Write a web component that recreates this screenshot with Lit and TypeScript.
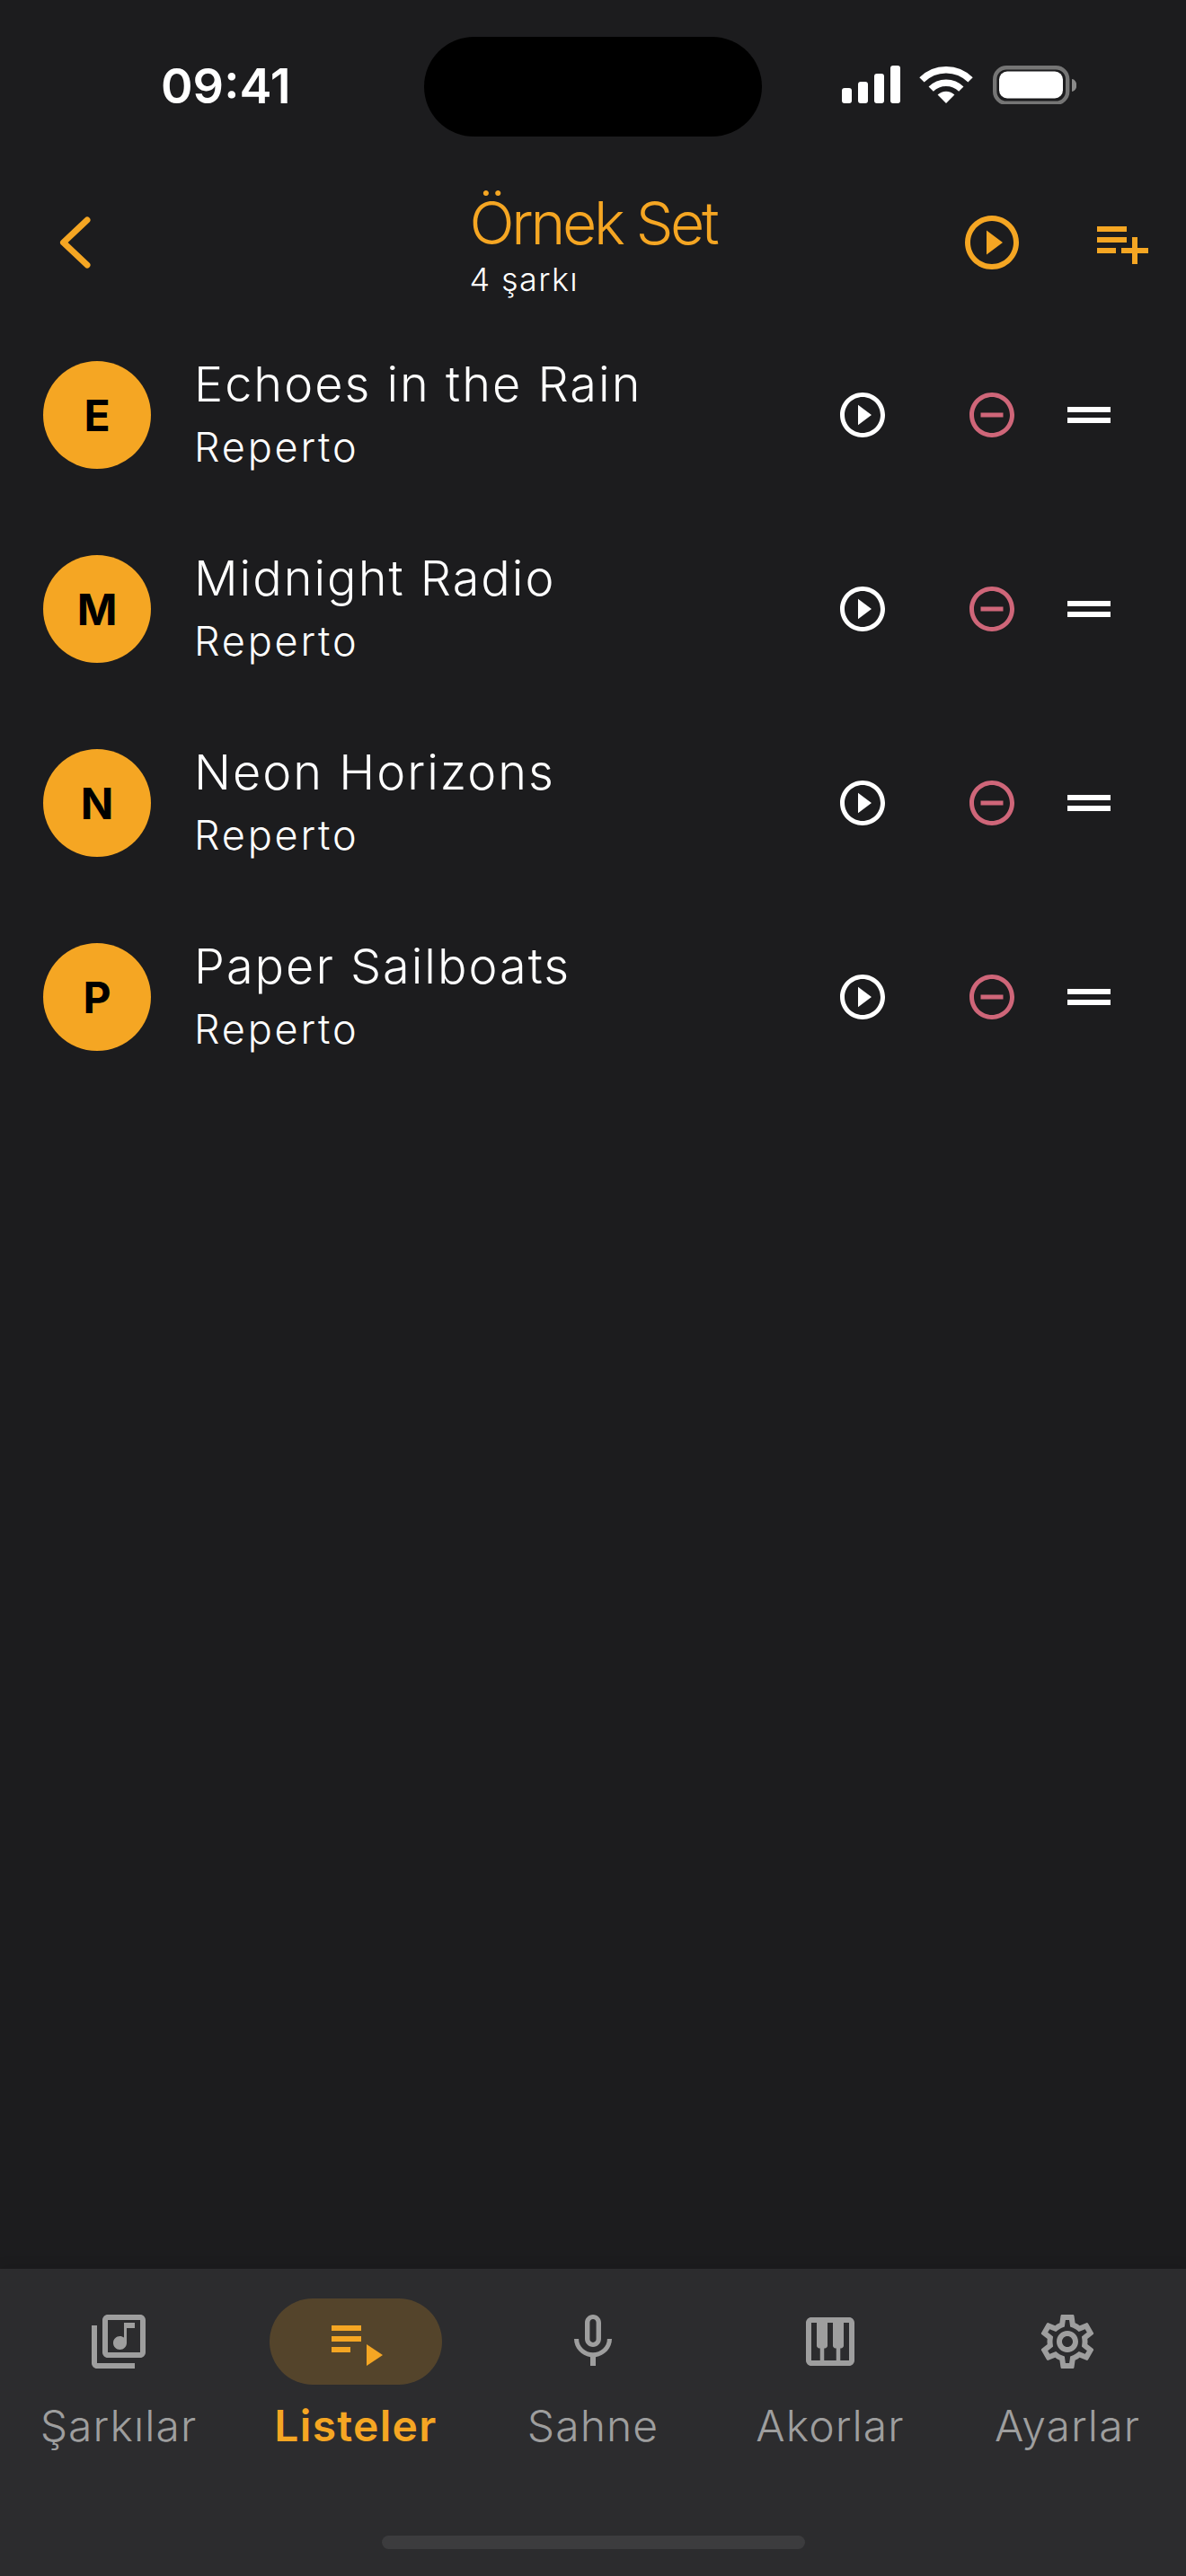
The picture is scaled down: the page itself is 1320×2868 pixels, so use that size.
import { LitElement, html, css, svg } from "lit";
import { customElement } from "lit/decorators.js";

const P = {
  playCircle: "M10 16.5l6-4.5-6-4.5v9zM12 2C6.48 2 2 6.48 2 12s4.48 10 10 10 10-4.48 10-10S17.52 2 12 2zm0 18c-4.41 0-8-3.59-8-8s3.59-8 8-8 8 3.59 8 8-3.59 8-8 8z",
  minusCircle: "M7 11v2h10v-2H7zm5-9C6.48 2 2 6.48 2 12s4.48 10 10 10 10-4.48 10-10S17.52 2 12 2zm0 18c-4.41 0-8-3.59-8-8s3.59-8 8-8 8 3.59 8 8-3.59 8-8 8z",
  drag: "M20 9H4v2h16V9zM4 15h16v-2H4v2z",
  playlistAdd: "M14 10H3v2h11v-2zm0-4H3v2h11V6zm4 8v-4h-2v4h-4v2h4v4h2v-4h4v-2h-4zM3 16h7v-2H3v2z",
  playlistPlay: "M14 10H3v2h11v-2zm0-4H3v2h11V6zM3 16h7v-2H3v2zm13-3v8l6-4-6-4z",
  library: "M20 2H8c-1.1 0-2 .9-2 2v12c0 1.1.9 2 2 2h12c1.1 0 2-.9 2-2V4c0-1.1-.9-2-2-2zm0 14H8V4h12v12zm-7.5-1c1.38 0 2.5-1.12 2.5-2.5V7h3V5h-4v5.51c-.42-.32-.93-.51-1.5-.51-1.38 0-2.5 1.12-2.5 2.5s1.12 2.5 2.5 2.5zM2 6v14c0 1.1.9 2 2 2h14v-2H4V6H2z",
  mic: "M12 14c1.66 0 2.99-1.34 2.99-3L15 5c0-1.66-1.34-3-3-3S9 3.34 9 5v6c0 1.66 1.34 3 3 3zm-1.2-9.1c0-.66.54-1.2 1.2-1.2.66 0 1.2.54 1.2 1.2l-.01 6.2c0 .66-.53 1.2-1.19 1.2-.66 0-1.2-.54-1.2-1.2V4.9zm6.5 6.1c0 3-2.54 5.1-5.3 5.1S6.7 14 6.7 11H5c0 3.41 2.72 6.23 6 6.72V21h2v-3.28c3.28-.48 6-3.3 6-6.72h-1.7z",
  piano: "M19 3H5c-1.1 0-2 .9-2 2v14c0 1.1.9 2 2 2h14c1.1 0 2-.9 2-2V5c0-1.1-.9-2-2-2zm-5 11.5h.25V19h-4.5v-4.5H10c.55 0 1-.45 1-1V5h2v8.5c0 .55.45 1 1 1zM5 5h2v8.5c0 .55.45 1 1 1h.25V19H5V5zm14 14h-3.25v-4.5H16c.55 0 1-.45 1-1V5h2v14z",
  gear: "M19.43 12.98c.04-.32.07-.64.07-.98 0-.34-.03-.66-.07-.98l2.11-1.65c.19-.15.24-.42.12-.64l-2-3.46c-.09-.16-.26-.25-.44-.25-.06 0-.12.01-.17.03l-2.49 1c-.52-.4-1.08-.73-1.69-.98l-.38-2.65C14.46 2.18 14.25 2 14 2h-4c-.25 0-.46.18-.49.42l-.38 2.65c-.61.25-1.17.59-1.69.98l-2.49-1c-.06-.02-.12-.03-.18-.03-.17 0-.34.09-.43.25l-2 3.46c-.13.22-.07.49.12.64l2.11 1.65c-.04.32-.07.65-.07.98 0 .33.03.66.07.98l-2.11 1.65c-.19.15-.24.42-.12.64l2 3.46c.09.16.26.25.44.25.06 0 .12-.01.17-.03l2.49-1c.52.4 1.08.73 1.69.98l.38 2.65c.03.24.24.42.49.42h4c.25 0 .46-.18.49-.42l.38-2.65c.61-.25 1.17-.59 1.69-.98l2.49 1c.06.02.12.03.18.03.17 0 .34-.09.43-.25l2-3.46c.12-.22.07-.49-.12-.64l-2.11-1.65zm-1.98-1.71c.04.31.05.52.05.73 0 .21-.02.43-.05.73l-.14 1.13.89.7 1.08.84-.7 1.21-1.27-.51-1.04-.42-.9.68c-.43.32-.84.56-1.25.73l-1.06.43-.16 1.13-.2 1.35h-1.4l-.19-1.35-.16-1.13-1.06-.43c-.43-.18-.83-.41-1.23-.71l-.91-.7-1.06.43-1.27.51-.7-1.21 1.08-.84.89-.7-.14-1.13c-.03-.31-.05-.54-.05-.74s.02-.43.05-.73l.14-1.13-.89-.7-1.08-.84.7-1.21 1.27.51 1.04.42.9-.68c.43-.32.84-.56 1.25-.73l1.06-.43.16-1.13.2-1.35h1.39l.19 1.35.16 1.13 1.06.43c.43.18.83.41 1.23.71l.91.7 1.06-.43 1.27-.51.7 1.21-1.07.85-.89.7.14 1.13zM12 8c-2.21 0-4 1.79-4 4s1.79 4 4 4 4-1.79 4-4-1.79-4-4-4zm0 6c-1.1 0-2-.9-2-2s.9-2 2-2 2 .9 2 2-.9 2-2 2z",
};

const icon = (d: string, size: number, cls = "") =>
  html`<svg class=${cls} width=${size} height=${size} viewBox="0 0 24 24" fill="currentColor"><path d=${d}></path></svg>`;

const songs = [
  { l: "E", t: "Echoes in the Rain" },
  { l: "M", t: "Midnight Radio" },
  { l: "N", t: "Neon Horizons" },
  { l: "P", t: "Paper Sailboats" },
];

const tabs = [
  { d: P.library, label: "Şarkılar", active: false },
  { d: P.playlistPlay, label: "Listeler", active: true },
  { d: P.mic, label: "Sahne", active: false },
  { d: P.piano, label: "Akorlar", active: false },
  { d: P.gear, label: "Ayarlar", active: false },
];

@customElement("app-root")
export class AppRoot extends LitElement {
  static styles = css`
    :host {
      display: flex;
      flex-direction: column;
      width: 1320px;
      height: 2868px;
      background: #1c1c1e;
      color: #fff;
      font-family: Inter, Roboto, sans-serif;
      overflow: hidden;
    }
    svg { display: block; flex: none; }

    .status {
      position: relative;
      height: 186px;
      flex: none;
      display: flex;
      justify-content: space-between;
      align-items: flex-start;
      padding: 73px 122px 0 179px;
      box-sizing: border-box;
    }
    .time {
      font-weight: 600;
      font-size: 54px;
      line-height: 46px;
    }
    .island {
      position: absolute;
      left: 472px;
      top: 41px;
      width: 376px;
      height: 111px;
      border-radius: 56px;
      background: #000;
    }

    .appbar {
      height: 168px;
      flex: none;
      display: grid;
      grid-template-columns: 1fr auto 1fr;
      align-items: center;
      padding: 0 36px;
      box-sizing: border-box;
      color: #f5a623;
    }
    .back { margin-left: 12px; }
    .title-block { display: flex; flex-direction: column; }
    .title { font-size: 66px; line-height: 76px; font-weight: 300; letter-spacing: -3.3px; }
    .sub { font-size: 36px; line-height: 40px; margin-top: 5px; letter-spacing: 1.4px; color: #fff; font-weight: 300; }
    .appbar-actions { display: flex; justify-content: flex-end; gap: 72px; }

    .list { flex: 1; min-height: 0; }
    .row {
      height: 216px;
      display: flex;
      align-items: center;
      padding: 0 72px 0 48px;
      box-sizing: border-box;
    }
    .avatar {
      width: 120px;
      height: 120px;
      flex: none;
      margin-right: 48px;
      border-radius: 50%;
      background: #f5a623;
      color: #000;
      display: flex;
      align-items: center;
      justify-content: center;
      font-size: 48px;
      font-weight: 700;
    }
    .text { flex: 1; min-width: 0; padding-bottom: 3px; }
    .song { font-size: 54px; line-height: 68px; letter-spacing: 2px; font-weight: 300; }
    .artist { font-size: 45px; line-height: 60px; margin-top: 6px; letter-spacing: 2.8px; font-weight: 300; }
    .act { width: 108px; display: flex; justify-content: center; }
    .act + .act { margin-left: 36px; }
    .danger { color: #cf6679; }
    .drag { margin-left: 18px; }

    .nav {
      flex: none;
      height: 342px;
      background: #2c2c2e;
      box-shadow: 0 -3px 12px rgba(0, 0, 0, 0.1);
      display: flex;
      flex-direction: column;
      align-items: center;
    }
    .tabs {
      width: 100%;
      display: grid;
      grid-template-columns: repeat(5, 1fr);
      padding-top: 33px;
      color: #9e9e9e;
    }
    .tab { display: flex; flex-direction: column; align-items: center; }
    .pill {
      width: 192px;
      height: 96px;
      border-radius: 48px;
      display: flex;
      align-items: center;
      justify-content: center;
    }
    .tab.on { color: #f5a623; }
    .tab.on .pill { background: rgba(245, 166, 35, 0.2); }
    .label { font-size: 48px; line-height: 56px; margin-top: 18px; letter-spacing: 1.1px; font-weight: 300; }
    .tab.on .label { font-weight: 600; letter-spacing: 1.3px; }
    .home {
      margin-top: 94px;
      width: 471px;
      height: 15px;
      border-radius: 8px;
      background: #3c3c3e;
    }
  `;

  private statusIcons() {
    return html`<svg width="261" height="43" viewBox="0 0 261 43" fill="#fff">
      ${svg`
        <rect x="0" y="25" width="11" height="17" rx="3"></rect>
        <rect x="18" y="18" width="11" height="24" rx="3"></rect>
        <rect x="36" y="9" width="11" height="33" rx="3"></rect>
        <rect x="54" y="0" width="11" height="42" rx="3"></rect>
        <g fill="none" stroke="#fff" stroke-width="7.5">
          <path d="M88.95 15.95 A38.25 38.25 0 0 1 143.05 15.95"></path>
          <path d="M99.2 26.2 A23.75 23.75 0 0 1 132.8 26.2"></path>
        </g>
        <path d="M106.6 32.6 A13.4 13.4 0 0 1 125.4 32.6 L116 42 Z"></path>
        <rect x="170.2" y="2.2" width="81" height="39.6" rx="13" fill="none" stroke="#757575" stroke-width="4.4"></rect>
        <rect x="175" y="6.5" width="71" height="30" rx="9"></rect>
        <path d="M256 15 a5.5 7 0 0 1 5.3 7 a5.5 7 0 0 1 -5.3 7 z" fill="#8a8a8a"></path>
      `}
    </svg>`;
  }

  render() {
    return html`
      <div class="status">
        <div class="time">09:41</div>
        <div class="island"></div>
        ${this.statusIcons()}
      </div>
      <header class="appbar">
        <svg class="back" width="72" height="72" viewBox="0 0 72 72" fill="none" stroke="currentColor" stroke-width="7" stroke-linecap="round" stroke-linejoin="round">
          <path d="M49 11 L22.5 36 L49 61"></path>
        </svg>
        <div class="title-block">
          <div class="title">Örnek Set</div>
          <div class="sub">4 şarkı</div>
        </div>
        <div class="appbar-actions">
          ${icon(P.playCircle, 72)}
          ${icon(P.playlistAdd, 72)}
        </div>
      </header>
      <main class="list">
        ${songs.map(
          (s) => html`<div class="row">
            <div class="avatar">${s.l}</div>
            <div class="text">
              <div class="song">${s.t}</div>
              <div class="artist">Reperto</div>
            </div>
            <div class="act">${icon(P.playCircle, 60)}</div>
            <div class="act danger">${icon(P.minusCircle, 60)}</div>
            ${icon(P.drag, 72, "drag")}
          </div>`
        )}
      </main>
      <nav class="nav">
        <div class="tabs">
          ${tabs.map(
            (t) => html`<div class="tab ${t.active ? "on" : ""}">
              <div class="pill">${icon(t.d, 72)}</div>
              <div class="label">${t.label}</div>
            </div>`
          )}
        </div>
        <div class="home"></div>
      </nav>
    `;
  }
}
